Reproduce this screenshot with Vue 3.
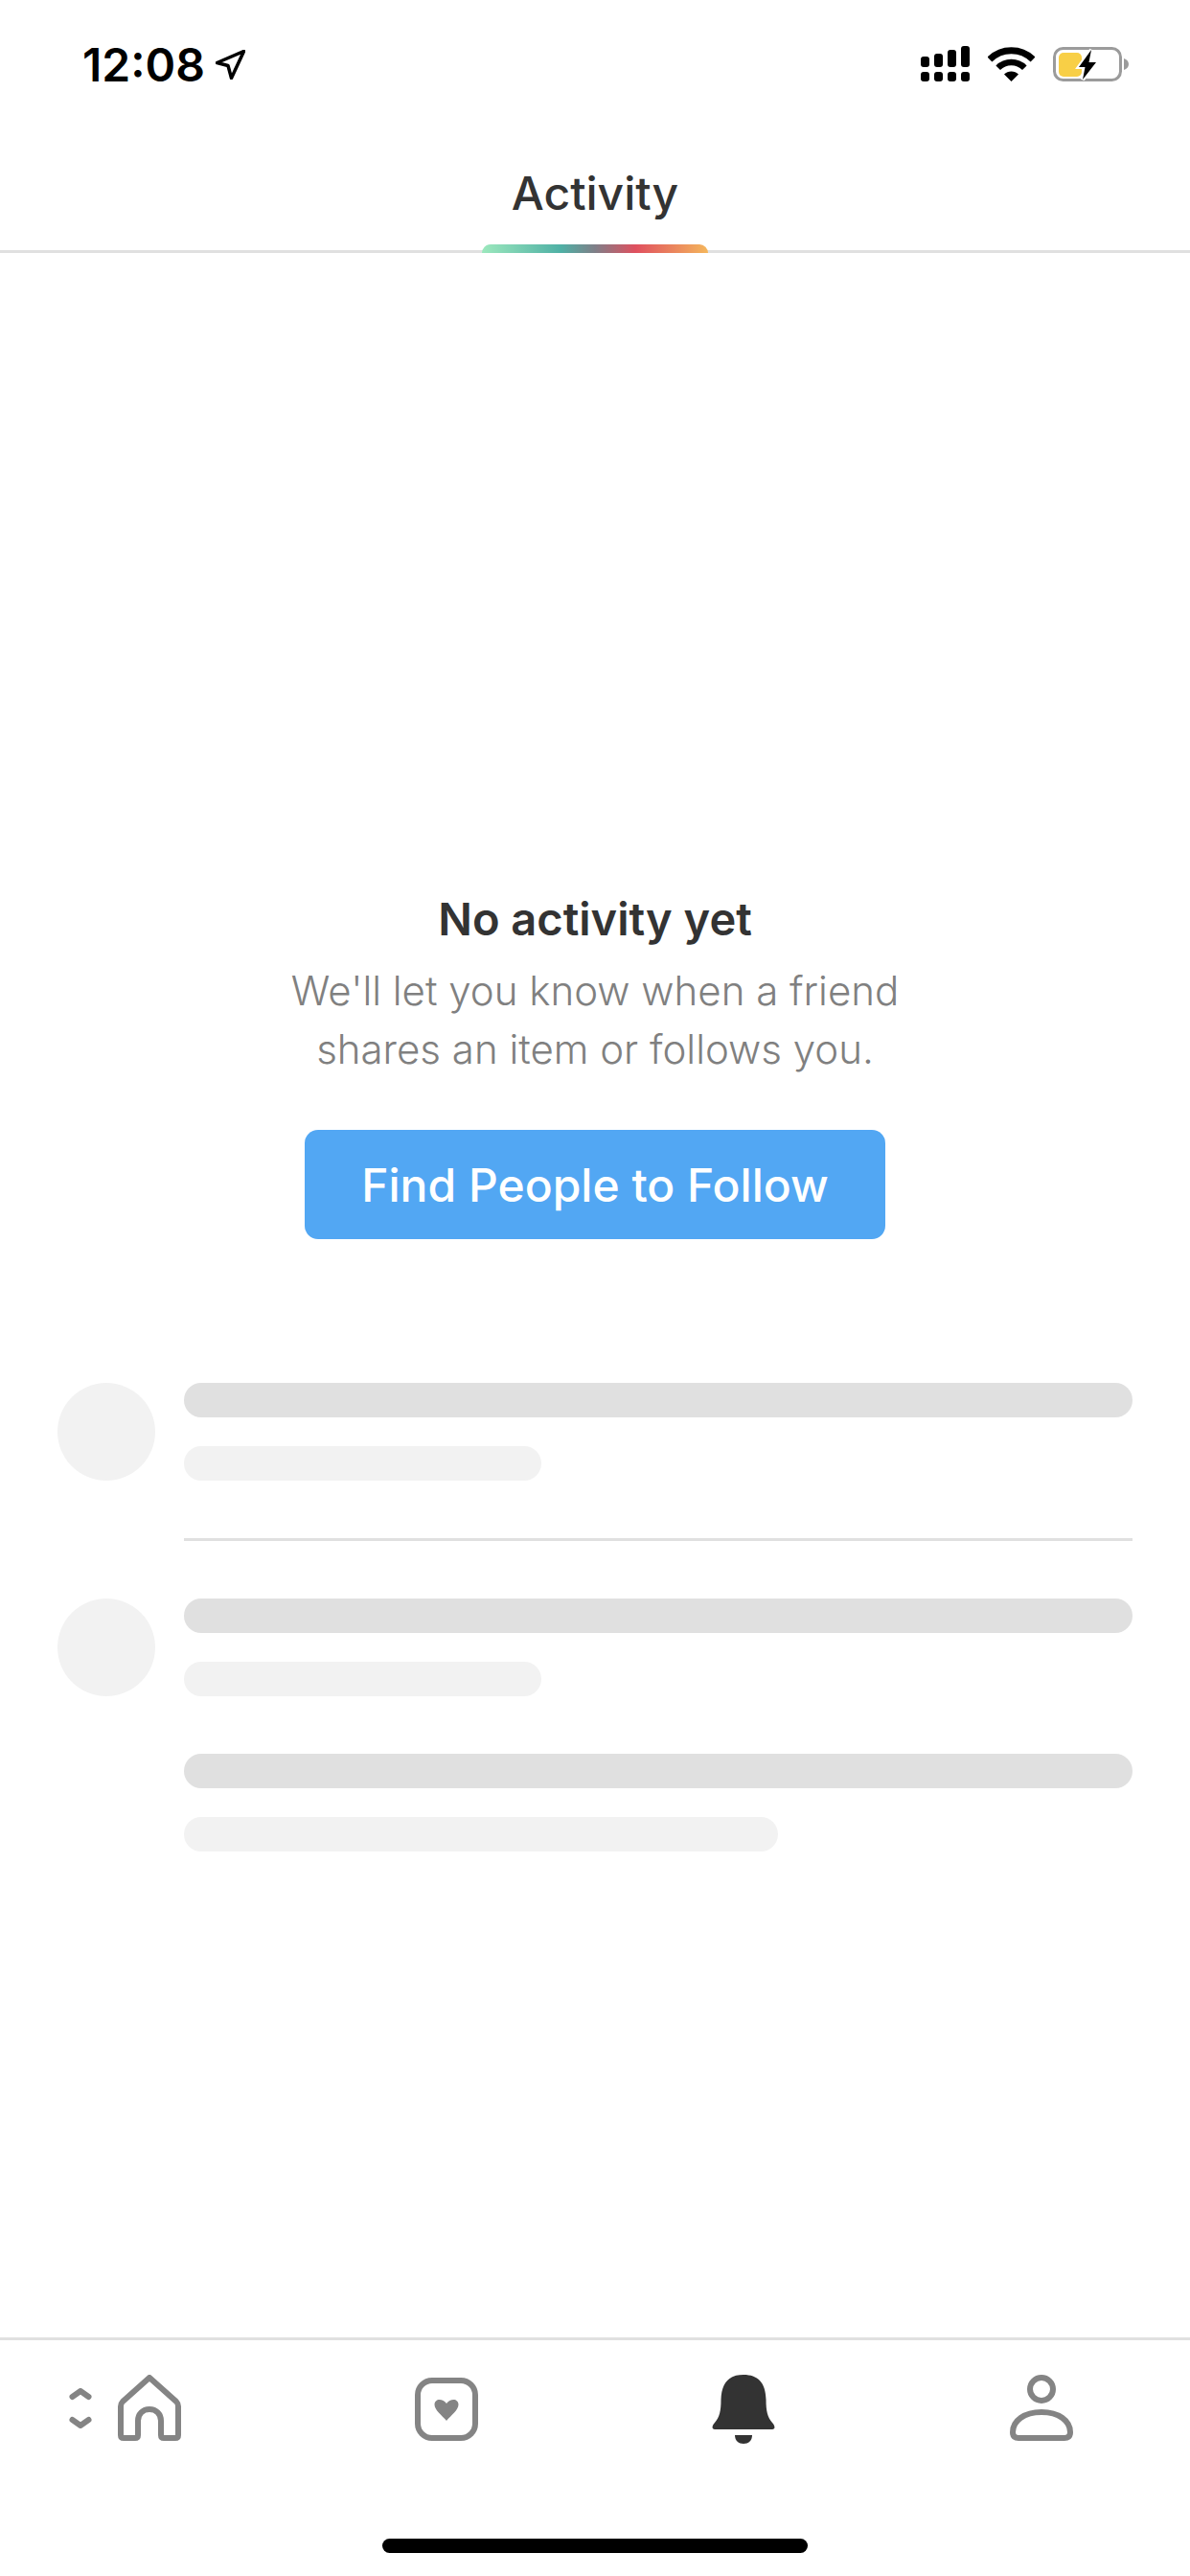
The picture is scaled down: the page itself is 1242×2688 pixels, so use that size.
<script setup>
const rows = [
  { id: 1, bars: [{ w: 990, tone: 'dark' }, { w: 373, tone: 'light' }] },
  { id: 2, bars: [{ w: 990, tone: 'dark' }, { w: 373, tone: 'light' }, { w: 990, tone: 'dark' }, { w: 620, tone: 'light' }] },
]
</script>

<template>
  <div class="screen">
    <div class="status">
      <div class="clock">
        <span class="time">12:08</span>
        <svg class="arrow" width="31" height="31" viewBox="0 0 31 31">
          <path d="M29.5 1.5 L1.5 13.5 L13 16.5 L16.5 29.5 Z" fill="none" stroke="#000" stroke-width="3.5" stroke-linejoin="round" />
        </svg>
      </div>
      <div class="status-icons">
        <svg width="51" height="37" viewBox="0 0 51 37">
          <rect x="0" y="11" width="9" height="11" rx="3" />
          <rect x="14" y="8" width="9" height="14" rx="3" />
          <rect x="28" y="4" width="9" height="18" rx="3" />
          <rect x="42" y="0" width="9" height="22" rx="3" />
          <rect x="0" y="27" width="9" height="10" rx="3" />
          <rect x="14" y="27" width="9" height="10" rx="3" />
          <rect x="28" y="27" width="9" height="10" rx="3" />
          <rect x="42" y="27" width="9" height="10" rx="3" />
        </svg>
        <svg class="wifi" width="49" height="36" viewBox="0 0 49 36">
          <path d="M1.9 13 A32 32 0 0 1 47.1 13" fill="none" stroke="#000" stroke-width="7" />
          <path d="M10.7 21.7 A19.5 19.5 0 0 1 38.3 21.7" fill="none" stroke="#000" stroke-width="6.5" />
          <path d="M24.5 36 L17 28.5 A10.6 10.6 0 0 1 32 28.5 Z" />
        </svg>
        <svg class="battery" width="79" height="36" viewBox="0 0 79 36">
          <rect x="1.5" y="1.5" width="69" height="33" rx="9" fill="none" stroke="#9b9b9b" stroke-width="3" />
          <path d="M74 12 C77 13 79 15 79 18 C79 21 77 23 74 24 Z" fill="#9b9b9b" />
          <rect x="6" y="6" width="24" height="25" rx="5" fill="#f8cf46" />
          <path d="M40 3 L27 21 H33.5 L31 34 L45 16 H37.5 Z" stroke="#fff" stroke-width="4" paint-order="stroke" />
        </svg>
      </div>
    </div>

    <header class="head">
      <div class="tab">
        <h1 class="title">Activity</h1>
        <div class="tab-bar"></div>
      </div>
    </header>

    <main class="main">
      <section class="empty">
        <h2 class="empty-title">No activity yet</h2>
        <p class="empty-text">We'll let you know when a friend<br />shares an item or follows you.</p>
        <button class="cta">Find People to Follow</button>
      </section>

      <section class="skeleton">
        <div v-for="r in rows" :key="r.id" class="row">
          <div class="avatar"></div>
          <div class="bars">
            <div v-for="(b, i) in r.bars" :key="i" class="bar" :class="b.tone" :style="{ width: b.w + 'px' }"></div>
          </div>
        </div>
      </section>
    </main>

    <nav class="tabs">
      <div class="nav-item home">
        <svg width="24" height="42" viewBox="0 0 24 42" fill="none" stroke="#848484" stroke-width="6" stroke-linecap="round" stroke-linejoin="round">
          <path d="M3.5 9 L12 3 L20.5 9" />
          <path d="M3.5 33 L12 39 L20.5 33" />
        </svg>
        <svg width="66" height="69" viewBox="0 0 66 69" fill="none" stroke="#848484" stroke-width="6" stroke-linejoin="round">
          <path d="M33 3 L5 28 Q3 30 3 33 V63 Q3 66 6 66 H18 Q21 66 21 63 V48 C21 41 26 36 33 36 C40 36 45 41 45 48 V63 Q45 66 48 66 H60 Q63 66 63 63 V33 Q63 30 61 28 Z" />
        </svg>
      </div>
      <div class="nav-item">
        <svg class="nudge-card" width="66" height="66" viewBox="0 0 66 66">
          <rect x="3" y="3" width="60" height="60" rx="15" fill="none" stroke="#848484" stroke-width="6" />
          <path d="M33 45 C28 39 20.5 34 20.5 28 C20.5 25 23 23 25.5 23 C28.5 23 31 24.5 33 27 C35 24.5 37.5 23 40.5 23 C43 23 45.5 25 45.5 28 C45.5 34 38 39 33 45 Z" fill="#848484" />
        </svg>
      </div>
      <div class="nav-item">
        <svg width="66" height="72" viewBox="0 0 66 72" fill="#333">
          <path d="M33 0 C48 0 56 8 56.5 26 C56.5 38 58 44 63 50 C66 53 66.5 57 63 57 H3 C-0.5 57 0 53 3 50 C8 44 9.5 38 9.5 26 C10 8 18 0 33 0 Z" />
          <path d="M24 63 H42 C42 69 38 72 33 72 C28 72 24 69 24 63 Z" />
        </svg>
      </div>
      <div class="nav-item">
        <svg width="66" height="69" viewBox="0 0 66 69" fill="none" stroke="#848484" stroke-width="6">
          <circle cx="33" cy="15" r="12" />
          <path d="M33 39 C15 39 3 48 3 60 C3 64 5 66 9 66 H57 C61 66 63 64 63 60 C63 48 51 39 33 39 Z" />
        </svg>
      </div>
    </nav>

    <div class="home-wrap"><div class="home-line"></div></div>
  </div>
</template>

<style scoped>
* {
  box-sizing: border-box;
  margin: 0;
  padding: 0;
}
.screen {
  width: 1242px;
  height: 2688px;
  background: #fff;
  display: flex;
  flex-direction: column;
  font-family: Inter, "Noto Sans", sans-serif;
  overflow: hidden;
}
.status {
  height: 135px;
  padding: 40px 64px 0 86px;
  display: flex;
  justify-content: space-between;
  align-items: flex-start;
}
.clock {
  display: flex;
  align-items: flex-start;
}
.time {
  font-size: 48px;
  line-height: 56px;
  font-weight: 600;
  color: #000;
}
.arrow {
  margin: 12px 0 0 11px;
}
.status-icons {
  margin-top: 8px;
  display: flex;
  align-items: flex-start;
  gap: 19px;
}
.wifi, .battery {
  margin-top: 1px;
}
.head {
  height: 129px;
  border-bottom: 3px solid #e0e0e0;
  display: flex;
  justify-content: center;
}
.tab {
  width: 236px;
  height: 129px;
  display: flex;
  flex-direction: column;
  justify-content: space-between;
  align-items: center;
}
.title {
  font-size: 48px;
  line-height: 58px;
  font-weight: 500;
  color: #333;
  margin-top: 38px;
}
.tab-bar {
  width: 236px;
  height: 9px;
  border-radius: 9px 9px 0 0;
  background: linear-gradient(90deg, #9ce8bd 0%, #4fb0a5 35%, #7f7f88 50%, #e0505f 68%, #f4b65c 100%);
}
.main {
  flex: 1;
  padding-top: 667px;
  display: flex;
  flex-direction: column;
}
.empty {
  display: flex;
  flex-direction: column;
  align-items: center;
}
.empty-title {
  font-size: 47px;
  line-height: 56px;
  font-weight: 600;
  color: #333;
}
.empty-text {
  margin-top: 16px;
  font-size: 42px;
  line-height: 61px;
  font-weight: 300;
  color: #808080;
  text-align: center;
}
.cta {
  margin-top: 54px;
  width: 606px;
  height: 114px;
  border: none;
  border-radius: 14px;
  background: #52a7f3;
  color: #fff;
  font-family: inherit;
  font-size: 48px;
  font-weight: 500;
}
.skeleton {
  margin-top: 150px;
  padding: 0 60px;
}
.row {
  display: flex;
  gap: 30px;
}
.avatar {
  width: 102px;
  height: 102px;
  border-radius: 50%;
  background: #f2f2f2;
  flex-shrink: 0;
}
.bars {
  width: 990px;
  display: flex;
  flex-direction: column;
  gap: 30px;
}
.row:first-child .bars {
  padding-bottom: 60px;
  border-bottom: 3px solid #e0e0e0;
  margin-bottom: 60px;
}
.bar:nth-child(3) {
  margin-top: 30px;
}
.bar {
  height: 36px;
  border-radius: 18px;
}
.bar.dark {
  background: #e0e0e0;
}
.bar.light {
  background: #f2f2f2;
}
.tabs {
  height: 210px;
  border-top: 3px solid #e0e0e0;
  padding-top: 36px;
  display: grid;
  grid-template-columns: repeat(4, 1fr);
  align-items: start;
}
.nav-item {
  display: flex;
  justify-content: center;
}
.nav-item.home {
  justify-content: flex-start;
  align-items: center;
  padding-left: 72px;
  gap: 27px;
}
.nudge-card {
  margin-top: 3px;
}
.home-wrap {
  height: 39px;
  display: flex;
  justify-content: center;
}
.home-line {
  width: 444px;
  height: 15px;
  border-radius: 8px;
  background: #000;
}
</style>

<style>
html, body {
  margin: 0;
  background: #fff;
}
</style>
